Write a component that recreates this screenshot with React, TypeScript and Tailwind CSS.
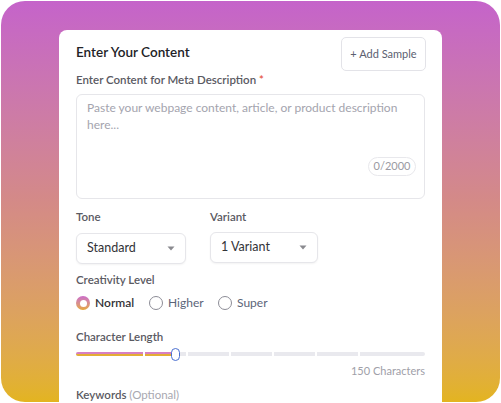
import React from "react";

const font = { fontFamily: "Lato, 'Noto Sans', sans-serif" };

function Caret() {
  return (
    <svg width="8" height="5" viewBox="0 0 8 5">
      <path d="M0.5 0.5 L7.5 0.5 L4 4.5 Z" fill="#8a8a8f" />
    </svg>
  );
}

function Select({ label, width }: { label: string; width: string }) {
  return (
    <div
      className={`${width} h-[31px] rounded-[6px] border border-[#e6e6ea] bg-white shadow-[0_1px_2px_rgba(0,0,0,0.05)] flex items-center justify-between pl-[10px] pr-[10px]`}
    >
      <span className="text-[12.5px] text-[#333338]">{label}</span>
      <Caret />
    </div>
  );
}

export default function App() {
  const gaps = [143, 186, 229, 272, 315, 358];
  return (
    <div className="w-[501px] h-[403px] bg-white p-px" style={font}>
      <div className="w-full h-full rounded-[24px] overflow-hidden bg-gradient-to-b from-[#c563ca] via-[#d48a87] to-[#e3b41f] pt-[29px] pl-[58px]">
        <div className="w-[383px] h-[400px] bg-white rounded-t-[8px] px-[17px]">
          <div className="flex items-center justify-between pt-[7px]">
            <div className="text-[13.5px] font-semibold text-[#222226] -mt-[3px]">Enter Your Content</div>
            <div className="h-[34px] w-[85px] rounded-[5px] border border-[#e3e3e8] flex items-center justify-center text-[11px] text-[#5b6070] -mr-px">
              + Add Sample
            </div>
          </div>
          <div className="mt-px h-[16px] leading-[16px] text-[11.5px] font-semibold text-[#5a5a62]">
            Enter Content for Meta Description <span className="text-[#e5533d]">*</span>
          </div>
          <div className="relative mt-[6px] h-[105px] rounded-[6px] border border-[#e6e6ea] px-[10px] pt-[4px]">
            <div className="text-[12px] leading-[17px] text-[#a4a4ae]">
              Paste your webpage content, article, or product description here...
            </div>
            <div className="absolute right-[8px] bottom-[22px] h-[19px] w-[48px] rounded-full border border-[#e8e8ec] flex items-center justify-center text-[11px] text-[#9a9aa2]">
              0/2000
            </div>
          </div>
          <div className="mt-[10px] flex gap-[24px]">
            <div className="flex flex-col">
              <div className="h-[16px] leading-[16px] text-[11.5px] font-semibold text-[#5a5a62]">Tone</div>
              <div className="mt-[8px]">
                <Select label="Standard" width="w-[110px]" />
              </div>
            </div>
            <div className="flex flex-col">
              <div className="h-[16px] leading-[16px] text-[11.5px] font-semibold text-[#5a5a62]">Variant</div>
              <div className="mt-[7px]">
                <Select label="1 Variant" width="w-[108px]" />
              </div>
            </div>
          </div>
          <div className="mt-[8px] h-[16px] leading-[16px] text-[11.5px] font-semibold text-[#5a5a62]">Creativity Level</div>
          <div className="mt-[7px] h-[16px] flex items-center text-[12px]">
            <div className="w-[14px] h-[14px] rounded-full bg-gradient-to-b from-[#cc6cc8] to-[#e6a82e] flex items-center justify-center">
              <div className="w-[7px] h-[7px] rounded-full bg-white" />
            </div>
            <span className="ml-[5px] w-[42px] text-[#333338] font-semibold">Normal</span>
            <div className="ml-[12px] w-[14px] h-[14px] rounded-full border-[1.5px] border-[#8c8c96]" />
            <span className="ml-[5px] w-[39px] text-[#5b6478]">Higher</span>
            <div className="ml-[11px] w-[14px] h-[14px] rounded-full border-[1.5px] border-[#8c8c96]" />
            <span className="ml-[5px] text-[#5b6478]">Super</span>
          </div>
          <div className="mt-[18px] h-[16px] leading-[16px] text-[11.5px] font-semibold text-[#5a5a62]">Character Length</div>
          <div className="relative mt-[2px] h-[14px]">
            <div className="absolute left-0 right-0 top-[5px] h-[4px] rounded-full bg-[#e9e9ee]" />
            <div className="absolute left-0 w-[100px] top-[5px] h-[4px] rounded-l-full bg-[linear-gradient(to_bottom,#d77fc2_50%,#e3ad35_50%)]" />
            {gaps.map((g) => (
              <div
                key={g}
                className="absolute top-[5px] h-[4px] w-[1.5px] bg-white"
                style={{ left: g - 76 }}
              />
            ))}
            <div className="absolute left-[95px] top-px w-[9px] h-[13px] rounded-full border-[1.5px] border-[#4a6fd0] bg-white" />
          </div>
          <div className="mt-[3px] h-[14px] leading-[14px] text-right text-[11px] text-[#a0a0a8]">150 Characters</div>
          <div className="mt-[9px] h-[16px] leading-[16px] text-[11.5px] font-semibold text-[#5a5a62]">
            Keywords <span className="font-normal text-[#a8a8b0]">(Optional)</span>
          </div>
        </div>
      </div>
    </div>
  );
}
